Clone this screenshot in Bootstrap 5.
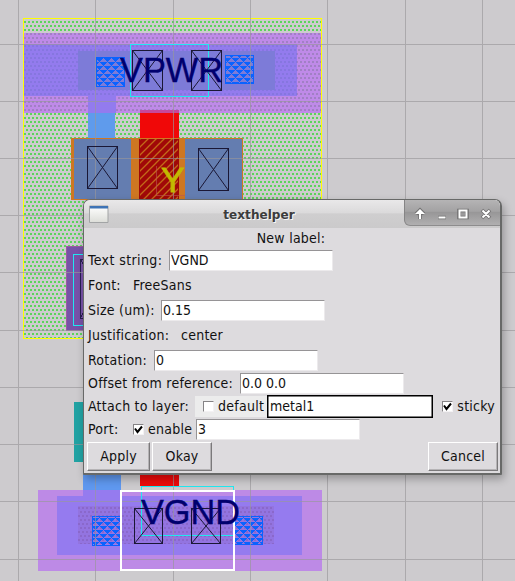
<!DOCTYPE html>
<html lang="en">
<head>
<meta charset="utf-8">
<title>texthelper</title>
<link href="https://cdn.jsdelivr.net/npm/bootstrap@5.3.0/dist/css/bootstrap.min.css" rel="stylesheet">
<style>
html,body{width:515px;height:581px;overflow:hidden}
body{background:#cdcbce;font:14px/20px "DejaVu Sans Condensed","DejaVu Sans",sans-serif;font-stretch:condensed;color:#111;position:relative}
.layout-view{display:block}
.lbl{font:35px "Liberation Sans",Arial,sans-serif}
.dlg{position:absolute;left:83px;top:199px;width:419px;height:276px;background:#dddbde;border:1px solid #686968;border-bottom:2px solid #686968;border-right-width:2px;border-radius:7px 7px 1px 1px;box-shadow:2px 4px 9px rgba(0,0,0,.28);overflow:hidden}
.tbar{height:28px;background:linear-gradient(#e9e8e9,#dbdadb 45%,#cfcecf 50%,#cbcacb);flex:none}
.ttl{font:bold 12.1px "DejaVu Sans",sans-serif;color:#3c3c3c;text-shadow:1px 1px 0 #f8f8f8;padding:2px 0 0 4px}
.tab-btns{width:96px;height:26px;background:linear-gradient(#b5b4b5,#a3a2a3 45%,#989798 50%,#b0afb0);border-left:1px solid #858485;border-bottom:1px solid #8d8c8d;border-bottom-left-radius:6px}
.line{flex:none;padding-left:4px;white-space:nowrap;letter-spacing:.25px}
.line span{padding-bottom:2px}
.first-label{letter-spacing:.4px}
.h20{height:20px}.h23{height:23px}.h25{height:25px}
.headline{padding:0 6px 0 4px}
.tight{margin-top:-1px}
.fld{width:164px;height:21px;background:#fff;border:1px solid #eceaec;border-top-color:#969496;border-left-color:#969496;border-radius:0;padding:0 1px 2px;font:inherit;letter-spacing:0;line-height:17px;color:#111;outline:0;flex:none}
.fld-on{width:166px;height:23px;border:1px solid #000;box-shadow:inset 0 0 0 .5px #000;padding-left:2px}
.chk{width:11px;height:11px;background:#fff;border:1px solid #f4f2f4;border-top-color:#858385;border-left-color:#858385;flex:none;display:block}
.hot{background:#ececec;height:21px;width:72px;padding-left:8px}
.sticky-opt{padding-right:5px}
.actions{padding:1px 2px 0 3px;gap:2px}
.tkb{height:29px;border:1px solid #7b797b;border-top-color:#fff;border-left-color:#fff;box-shadow:inset -1px -1px 0 #b5b3b5;border-radius:0;background:#dddbde;font:inherit;letter-spacing:.2px;padding:0 0 2px;color:#111}
</style>
<script src="https://cdn.jsdelivr.net/npm/bootstrap@5.3.0/dist/js/bootstrap.bundle.min.js"></script>
</head>
<body>
<svg class="layout-view" width="515" height="581" viewBox="0 0 515 581" shape-rendering="crispEdges">
<defs>
<pattern id="green" width="4" height="8" x="24" y="21" patternUnits="userSpaceOnUse"><path fill="#5bd45b" d="M0 0h2v2H0zM2 4h2v2H2z"/></pattern>
<pattern id="violet" width="4" height="8" x="24" y="21" patternUnits="userSpaceOnUse"><path fill="#a180c4" d="M0 0h2v2H0zM2 4h2v2H2z"/></pattern>
<pattern id="indigo" width="4" height="8" x="24" y="21" patternUnits="userSpaceOnUse"><path fill="#8676df" d="M0 0h2v2H0zM2 4h2v2H2z"/></pattern>
<pattern id="diffdot" width="4" height="8" x="78" y="507" patternUnits="userSpaceOnUse"><path fill="#8a68cb" d="M0 0h2v2H0zM2 4h2v2H2z"/></pattern>
<pattern id="tri" width="8" height="8" x="96" y="58" patternUnits="userSpaceOnUse"><path fill="#0a62ff" d="M0 0h7v1H0zM1 1h5v1H1zM2 2h3v1H2zM3 3h1v1H3zM0 4h3v1H0zM4 4h4v1H4zM0 5h2v1H0zM5 5h3v1H5zM0 6h1v1H0zM6 6h2v1H6zM7 7h1v1H7z"/></pattern>
<pattern id="diag" width="8" height="8" x="140" y="139" patternUnits="userSpaceOnUse"><path shape-rendering="auto" stroke="#c46a18" stroke-width="1.3" d="M-1 9L9-1M-1 1L1-1M7 9L9 7"/></pattern>
</defs>
<path fill="url(#green)" d="M24 21h297v317H24z"/>
<path fill="#bf8ae8" d="M24 33h297v80H24z"/><path fill="url(#violet)" d="M24 33h297v80H24z"/>
<path fill="#937bee" d="M24 44h273v52H24zM88 96h28v17H88z"/><path fill="url(#indigo)" d="M24 44h273v52H24z"/>
<path fill="#7d7bd8" d="M78 51h197v39H78z"/>
<path fill="#5f9bec" d="M88 113h27v26H88z"/>
<path fill="#c6489c" d="M140 110h39v4h-39z"/><path fill="#f00808" d="M140 113h39v26h-39z"/>
<path fill="#ce7722" d="M71 138h172v62H71z"/><path fill="#647db0" d="M74 139h57v60H74zM185 139h57v60h-57z"/>
<path fill="#a00808" d="M139 139h40v61h-40z"/><path fill="url(#diag)" d="M140 139h38v61h-38z"/>
<path fill="#7752a8" stroke="#9b5ba0" d="M66.500 246.500h40v84h-40z"/>
<path fill="none" stroke="#20e8f0" d="M73.500 254.500h40v71h-40z"/><path fill="none" stroke="#271e50" d="M80.500 259.500h40v59h-40zM80 259l6 9M80 318l6-9"/>
<path fill="none" stroke="#ff0" d="M23.500 18.500h298v320h-298z"/>
<path fill="#21a2a3" d="M74 402h40v60H74z"/><path fill="#5f98ef" d="M83 461h38v34H83z"/><path fill="#ee0a0a" d="M140 474h39v12h-39z"/>
<path fill="#bd8ae6" d="M38 490h284v81H38z"/><path fill="#957bef" d="M83 490h38v8H83zM57 496h245v59H57z"/>
<path fill="#9374e0" d="M78 506h196v38H78z"/><path fill="url(#diffdot)" d="M78 506h196v38H78z"/>
<g stroke="#0a62ff" fill="url(#tri)"><path d="M96.500 57.500h28v29h-28zM225.500 55.500h28v28h-28zM92.500 516.500h28v29h-28zM234.500 516.500h28v28h-28z"/></g>
<path fill="none" stroke="#989699" stroke-opacity=".65" d="M18.500 0v581M95.500 0v581M173.500 0v581M250.500 0v581M327.500 0v581M405.500 0v581M482.500 0v581M0 44.500h515M0 101.500h515M0 158.500h515M0 215.500h515M0 272.500h515M0 330.500h515M0 387.500h515M0 444.500h515M0 501.500h515M0 559.500h515"/>
<path fill="none" stroke="#20e8f0" d="M130.500 44.500h78v52h-78zM141.500 486.500h92v49h-92z"/>
<g fill="none" stroke="#1a1735"><path d="M132.500 50.500h30v40h-30zM191.500 50.500h30v40h-30zM87.500 146.500h30v42h-30zM198.500 148.500h30v42h-30zM134.500 508.500h28v35h-28zM191.500 508.500h29v35h-29z"/>
<path shape-rendering="auto" d="M132.500 50.500l30 40m-30 0l30-40M191.500 50.500l30 40m-30 0l30-40M87.500 146.500l30 42m-30 0l30-42M198.500 148.500l30 42m-30 0l30-42M134.500 508.500l28 35m-28 0l28-35M191.500 508.500l29 35m-29 0l29-35"/></g>
<path fill="none" stroke="#bd5555" stroke-opacity=".6" d="M156.500 166v29.500H185"/>
<path fill="none" stroke="#fff" stroke-width="2" d="M121 491h113v79H121z"/>
<g class="lbl" stroke-width=".4"><text x="120" y="82" fill="#00006e" stroke="#00006e" textLength="103" lengthAdjust="spacingAndGlyphs">VPWR</text><text x="161" y="192" fill="#c2b900" stroke="#c2b900" stroke-width=".9">Y</text><text x="141" y="523.500" fill="#00006e" stroke="#00006e" textLength="99" lengthAdjust="spacingAndGlyphs">VGND</text></g>
</svg>

<main class="dlg d-flex flex-column">
<header class="tbar d-flex">
<svg class="flex-shrink-0" width="26" height="28" viewBox="0 0 26 28"><defs><linearGradient id="ic" x2="0" y2="1"><stop stop-color="#fff"/><stop offset="1" stop-color="#dcddd8"/></linearGradient></defs><path fill="url(#ic)" stroke="#a2a4a5" d="M5.500 6h18.500v16.500H5.500z"/><path fill="#3e73b5" d="M6 6h18v2.500H6z"/></svg>
<div class="ttl flex-grow-1 text-center d-flex align-items-center justify-content-center"><span>texthelper</span></div>
<svg class="tab-btns flex-shrink-0" viewBox="-1 0 95 25" fill="none"><g stroke="#717071" stroke-width="3.600"><path d="M14 19v-7M10 14l4-4 4 4M32 17.500h8M53 10.500h8v7h-8zM76 10l8 8m0-8l-8 8"/></g><g stroke="#fff" stroke-width="2"><path d="M14 19v-7M32.500 17.500h7M53.500 10.500h7v7h-7zM76.500 10.500l7 7m0-7l-7 7"/></g><path fill="#fff" d="M14 9l5 5H9z"/></svg>
</header>
<div class="line h20 text-center headline">New label:</div>
<div class="line h25 d-flex align-items-center"><span class="first-label" style="width:81px">Text string:</span><input class="fld" value="VGND"></div>
<div class="line h25 d-flex align-items-center"><span style="width:45px">Font:</span><span>FreeSans</span></div>
<div class="line h25 d-flex align-items-center"><span style="width:73px">Size (um):</span><input class="fld" value="0.15"></div>
<div class="line h25 d-flex align-items-center"><span style="width:93px">Justification:</span><span>center</span></div>
<div class="line h25 d-flex align-items-center"><span style="width:66px">Rotation:</span><input class="fld" value="0"></div>
<div class="line h23 tight d-flex align-items-center"><span style="width:152px">Offset from reference:</span><input class="fld" value="0.0 0.0"></div>
<div class="line h23 d-flex align-items-center"><span style="width:107px">Attach to layer:</span><label class="hot d-flex align-items-center"><i class="chk me-1"></i><span>default</span></label><input class="fld fld-on" value="metal1"><label class="sticky-opt d-flex align-items-center ms-auto"><i class="chk me-1"><svg class="d-block" width="9" height="9" viewBox="0 0 9 9"><path d="M1 3.500L3.500 7L8 1.500" fill="none" stroke="#000" stroke-width="2"/></svg></i><span>sticky</span></label></div>
<div class="line h23 d-flex align-items-center"><span style="width:45px">Port:</span><i class="chk me-1"><svg class="d-block" width="9" height="9" viewBox="0 0 9 9"><path d="M1 3.500L3.500 7L8 1.500" fill="none" stroke="#000" stroke-width="2"/></svg></i><span style="width:48px">enable</span><input class="fld" value="3"></div>
<div class="actions d-flex flex-shrink-0"><button class="tkb" style="width:63px">Apply</button><button class="tkb" style="width:60px">Okay</button><button class="tkb ms-auto" style="width:70px">Cancel</button></div>
</main>
</body>
</html>
